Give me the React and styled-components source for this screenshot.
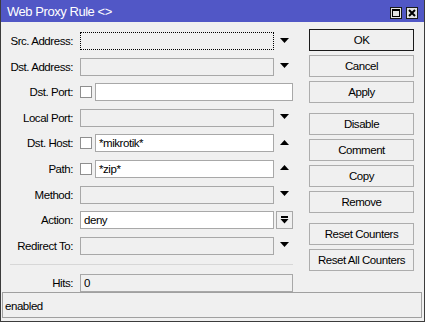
import React from 'react'
import styled, { createGlobalStyle } from 'styled-components'

const GlobalStyle = createGlobalStyle`
    html, body {
        margin: 0;
        padding: 0;
        background: #f0f0f0;
    }
    * {
        box-sizing: border-box;
    }
`

const FONT = `"Liberation Sans", Arial, sans-serif`

const DownArrow = () => (
    <svg width="9" height="5" viewBox="0 0 9 5">
        <path d="M0 0H9L4.5 5Z" fill="#000" />
    </svg>
)

const UpArrow = () => (
    <svg width="9" height="5" viewBox="0 0 9 5">
        <path d="M0 5H9L4.5 0Z" fill="#000" />
    </svg>
)

const BarDown = () => (
    <svg width="9" height="8" viewBox="0 0 9 8">
        <rect x="1" y="0" width="7" height="2" fill="#000" />
        <path d="M0.5 3H8.5L4.5 7.5Z" fill="#000" />
    </svg>
)

const rows = [
    { label: 'Src. Address:', focus: true, arrow: 'down' },
    { label: 'Dst. Address:', arrow: 'down' },
    { label: 'Dst. Port:', check: true, editable: true },
    { label: 'Local Port:', arrow: 'down' },
    { label: 'Dst. Host:', check: true, editable: true, value: '*mikrotik*', arrow: 'up' },
    { label: 'Path:', check: true, editable: true, value: '*zip*', arrow: 'up' },
    { label: 'Method:', arrow: 'down' },
    { label: 'Action:', editable: true, value: 'deny', arrow: 'button' },
    { label: 'Redirect To:', arrow: 'down' },
]

const buttonGroups = [
    ['OK', 'Cancel', 'Apply'],
    ['Disable', 'Comment', 'Copy', 'Remove'],
    ['Reset Counters', 'Reset All Counters'],
]

const App = () => {
    return (
        <>
            <GlobalStyle />
            <Window>
                <TitleBar>
                    <Title>Web Proxy Rule &lt;&gt;</Title>
                    <TitleButtons>
                        <TitleButton>
                            <svg width="8" height="8" viewBox="0 0 8 8">
                                <rect x="0.5" y="0.5" width="7" height="7" fill="none" stroke="#000" />
                                <rect x="0" y="0" width="8" height="2" fill="#000" />
                            </svg>
                        </TitleButton>
                        <TitleButton>
                            <svg width="8" height="8" viewBox="0 0 8 8">
                                <path d="M1 1L7 7M7 1L1 7" stroke="#000" strokeWidth="2" />
                            </svg>
                        </TitleButton>
                    </TitleButtons>
                </TitleBar>
                <Body>
                    <Form>
                        {rows.map((r) => (
                            <Row key={r.label}>
                                <Label>{r.label}</Label>
                                {r.check && <Check />}
                                <Field editable={r.editable} focus={r.focus}>
                                    {r.value}
                                </Field>
                                {r.arrow && (
                                    <ArrowSlot>
                                        {r.arrow === 'down' && <DownArrow />}
                                        {r.arrow === 'up' && <UpArrow />}
                                        {r.arrow === 'button' && (
                                            <SmallButton>
                                                <BarDown />
                                            </SmallButton>
                                        )}
                                    </ArrowSlot>
                                )}
                            </Row>
                        ))}
                        <Separator />
                        <Row>
                            <Label>Hits:</Label>
                            <Field>0</Field>
                        </Row>
                    </Form>
                    <Buttons>
                        {buttonGroups.map((group, i) => (
                            <ButtonGroup key={i}>
                                {group.map((b) => (
                                    <Button key={b} primary={b === 'OK'}>
                                        {b}
                                    </Button>
                                ))}
                            </ButtonGroup>
                        ))}
                    </Buttons>
                </Body>
                <StatusBar>enabled</StatusBar>
            </Window>
        </>
    )
}

const Window = styled.div`
    width: 425px;
    height: 322px;
    display: flex;
    flex-direction: column;
    background: #f0f0f0;
    border: 1px solid #3c3c3c;
    border-top: none;
    font-family: ${FONT};
    font-size: 11.5px;
    letter-spacing: -0.45px;
    color: #000;
`

const TitleBar = styled.div`
    height: 22px;
    display: flex;
    align-items: center;
    justify-content: space-between;
    background: #5157c6;
    padding: 1px 6px 0 6px;
`

const Title = styled.div`
    color: #fff;
    font-size: 13px;
`

const TitleButtons = styled.div`
    display: flex;
    gap: 4px;
    margin-top: 2px;
`

const TitleButton = styled.div`
    width: 12px;
    height: 12px;
    background: #e4e4e4;
    border: 1px solid #1a1a1a;
    display: flex;
    align-items: center;
    justify-content: center;
`

const Body = styled.div`
    flex: 1;
    display: flex;
    padding-top: 7px;
`

const Form = styled.div`
    width: 292px;
    padding-top: 3px;
    display: flex;
    flex-direction: column;
    gap: 7.6px;
`

const Row = styled.div`
    height: 18px;
    display: flex;
    align-items: center;
`

const Label = styled.div`
    width: 72px;
    margin-right: 7px;
    text-align: right;
    white-space: nowrap;
`

const Check = styled.div`
    width: 12px;
    height: 12px;
    margin-right: 3px;
    background: #fff;
    border: 1px solid #8f8f8f;
`

const Field = styled.div`
    flex: 1;
    height: 18px;
    padding-left: 3px;
    display: flex;
    align-items: center;
    background: ${({ editable }) => (editable ? '#fff' : '#f0f0f0')};
    border: 1px ${({ focus }) => (focus ? 'dotted #000' : 'solid #a8a8a8')};
    white-space: nowrap;
`

const ArrowSlot = styled.div`
    width: 19px;
    height: 18px;
    display: flex;
    align-items: center;
    justify-content: center;
    padding-left: 1px;
    padding-bottom: 2px;
`

const SmallButton = styled.div`
    width: 18px;
    height: 18px;
    margin-top: 2px;
    margin-left: 1px;
    border: 1px solid #a8a8a8;
    background: #f0f0f0;
    display: flex;
    align-items: center;
    justify-content: center;
`

const Separator = styled.div`
    margin: 1.4px 0 1.4px 9px;
    border-top: 1px solid #d7d7d7;
`

const Buttons = styled.div`
    width: 105px;
    margin-left: 16px;
    display: flex;
    flex-direction: column;
    gap: 10px;
`

const ButtonGroup = styled.div`
    display: flex;
    flex-direction: column;
    gap: 4px;
`

const Button = styled.div`
    height: 22px;
    display: flex;
    align-items: center;
    justify-content: center;
    background: #f0f0f0;
    border: 1px solid ${({ primary }) => (primary ? '#1a1a1a' : '#adadad')};
    white-space: nowrap;
`

const StatusBar = styled.div`
    height: 26px;
    margin: 0 2px 3px 1px;
    padding-left: 2px;
    padding-top: 2px;
    display: flex;
    align-items: center;
    border: 1px solid #a0a0a0;
`

export default App
